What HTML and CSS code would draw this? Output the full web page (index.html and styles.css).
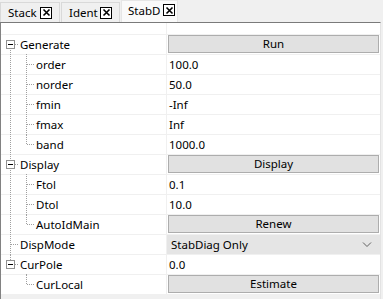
FILE: index.html
```html
<!DOCTYPE html>
<html lang="en">
<head>
  <meta charset="UTF-8">
  <title>StabD</title>
  <link rel="stylesheet" href="styles.css">
</head>
<body>
  <div class="tabs">
    <div class="tab tab-stack">Stack <span class="close"><svg width="9" height="9" viewBox="0 0 9 9"><path d="M1.5 1.5L7.5 7.5M7.5 1.5L1.5 7.5" stroke="#000" stroke-width="1.6"/></svg></span></div>
    <div class="tab tab-ident">Ident <span class="close"><svg width="9" height="9" viewBox="0 0 9 9"><path d="M1.5 1.5L7.5 7.5M7.5 1.5L1.5 7.5" stroke="#000" stroke-width="1.6"/></svg></span></div>
    <div class="tab tab-stabd active">StabD <span class="close"><svg width="9" height="9" viewBox="0 0 9 9"><path d="M1.5 1.5L7.5 7.5M7.5 1.5L1.5 7.5" stroke="#000" stroke-width="1.6"/></svg></span></div>
  </div>

  <div class="panel">
    <div class="row head"><div class="name"></div><div class="value"></div></div>

    <div class="row">
      <div class="name"><span class="g box first"><span class="exp"></span></span><span class="label">Generate</span></div>
      <div class="value"><button class="btn">Run</button></div>
    </div>
    <div class="row">
      <div class="name"><span class="g line"></span><span class="g tee"></span><span class="label">order</span></div>
      <div class="value">100.0</div>
    </div>
    <div class="row">
      <div class="name"><span class="g line"></span><span class="g tee"></span><span class="label">norder</span></div>
      <div class="value">50.0</div>
    </div>
    <div class="row">
      <div class="name"><span class="g line"></span><span class="g tee"></span><span class="label">fmin</span></div>
      <div class="value">-Inf</div>
    </div>
    <div class="row">
      <div class="name"><span class="g line"></span><span class="g tee"></span><span class="label">fmax</span></div>
      <div class="value">Inf</div>
    </div>
    <div class="row">
      <div class="name"><span class="g line"></span><span class="g end"></span><span class="label">band</span></div>
      <div class="value">1000.0</div>
    </div>

    <div class="row">
      <div class="name"><span class="g box"><span class="exp"></span></span><span class="label">Display</span></div>
      <div class="value"><button class="btn">Display</button></div>
    </div>
    <div class="row">
      <div class="name"><span class="g line"></span><span class="g tee"></span><span class="label">Ftol</span></div>
      <div class="value">0.1</div>
    </div>
    <div class="row">
      <div class="name"><span class="g line"></span><span class="g tee"></span><span class="label">Dtol</span></div>
      <div class="value">10.0</div>
    </div>
    <div class="row">
      <div class="name"><span class="g line"></span><span class="g end"></span><span class="label">AutoIdMain</span></div>
      <div class="value"><button class="btn">Renew</button></div>
    </div>

    <div class="row">
      <div class="name"><span class="g tee"></span><span class="label">DispMode</span></div>
      <div class="value combo">
        <span>StabDiag Only</span>
        <svg width="10" height="6" viewBox="0 0 10 6"><path d="M1 0.5L5 4.5L9 0.5" fill="none" stroke="#606060" stroke-width="1"/></svg>
      </div>
    </div>

    <div class="row">
      <div class="name"><span class="g box last"><span class="exp"></span></span><span class="label">CurPole</span></div>
      <div class="value">0.0</div>
    </div>
    <div class="row">
      <div class="name"><span class="g"></span><span class="g end"></span><span class="label">CurLocal</span></div>
      <div class="value"><button class="btn">Estimate</button></div>
    </div>
  </div>
</body>
</html>
```

FILE: styles.css
```css
body {
  margin: 0;
  width: 383px;
  height: 299px;
  overflow: hidden;
  font-family: "Noto Sans", "Open Sans", sans-serif;
  font-size: 11.5px;
  color: #000;
  background: #f0f0f0;
}

/* tab strip */
.tabs {
  display: flex;
  align-items: flex-end;
  height: 22px;
}

.tab {
  display: flex;
  align-items: center;
  justify-content: space-between;
  flex: none;
  height: 20px;
  padding: 0 7px 0 7px;
  box-sizing: border-box;
  background: #f0f0f0;
  border: 1px solid #d9d9d9;
  border-bottom: none;
  margin-right: 1px;
  white-space: nowrap;
}

.tab-stack { width: 60px; }
.tab-ident { width: 59px; }
.tab-stabd { width: 57px; }

.tab.active {
  height: 22px;
  padding: 0 2px 3px 6px;
  background: #fafafa;
  border-color: #e6e6e6;
}

.close {
  display: inline-flex;
  align-items: center;
  justify-content: center;
  width: 12px;
  height: 12px;
  box-sizing: border-box;
  border: 1px solid #000;
  background: #fff;
}

/* grid panel */
.panel {
  width: 381px;
  height: 277px;
  border-top: 1px solid #7a7a7a;
  border-left: 1px solid #828282;
  border-right: 1px solid #e3e3e3;
  box-sizing: border-box;
  background: #f0f0f0;
}

.row {
  display: grid;
  grid-template-columns: 166px 1fr;
  height: 20px;
  box-sizing: border-box;
  border-bottom: 1px solid #f0f0f0;
  background: #fff;
}

.row.head {
  height: 12px;
}

.name {
  display: flex;
  align-items: stretch;
  padding-left: 1px;
  border-right: 1px solid #f0f0f0;
}

.label {
  margin-left: 2px;
  line-height: 19px;
  white-space: nowrap;
}

.value {
  padding-left: 2px;
  line-height: 19px;
  white-space: nowrap;
}

/* tree glyphs */
.g {
  position: relative;
  width: 16px;
  flex: none;
}

.g.line::before,
.g.tee::before,
.g.end::before,
.g.box::before {
  content: "";
  position: absolute;
  left: 8px;
  top: -1px;
  bottom: -1px;
  border-left: 1px dotted #a0a0a0;
}

.g.end::before,
.g.last::before {
  bottom: 10px;
}

.g.box.first::before {
  top: 10px;
}

.g.tee::after,
.g.end::after,
.g.box::after {
  content: "";
  position: absolute;
  left: 9px;
  right: 0;
  top: 9px;
  border-top: 1px dotted #a0a0a0;
}

.exp {
  position: absolute;
  z-index: 1;
  left: 4px;
  top: 5px;
  width: 9px;
  height: 9px;
  box-sizing: border-box;
  border: 1px solid #919191;
  background: #fff;
}

.exp::after {
  content: "";
  position: absolute;
  left: 1px;
  right: 1px;
  top: 3px;
  border-top: 1px solid #000;
}

/* value controls */
.btn {
  display: block;
  width: 100%;
  height: 18px;
  margin: 0 0 0 -1px;
  padding: 0;
  font: inherit;
  line-height: 16px;
  color: #000;
  background: #e1e1e1;
  border: 1px solid #adadad;
  box-sizing: border-box;
}

.value:has(.btn) {
  display: flex;
  align-items: flex-start;
}

.combo {
  display: flex;
  justify-content: space-between;
  align-items: center;
  background: #e5e5e5;
  padding: 0 8px 0 4px;
}
```
